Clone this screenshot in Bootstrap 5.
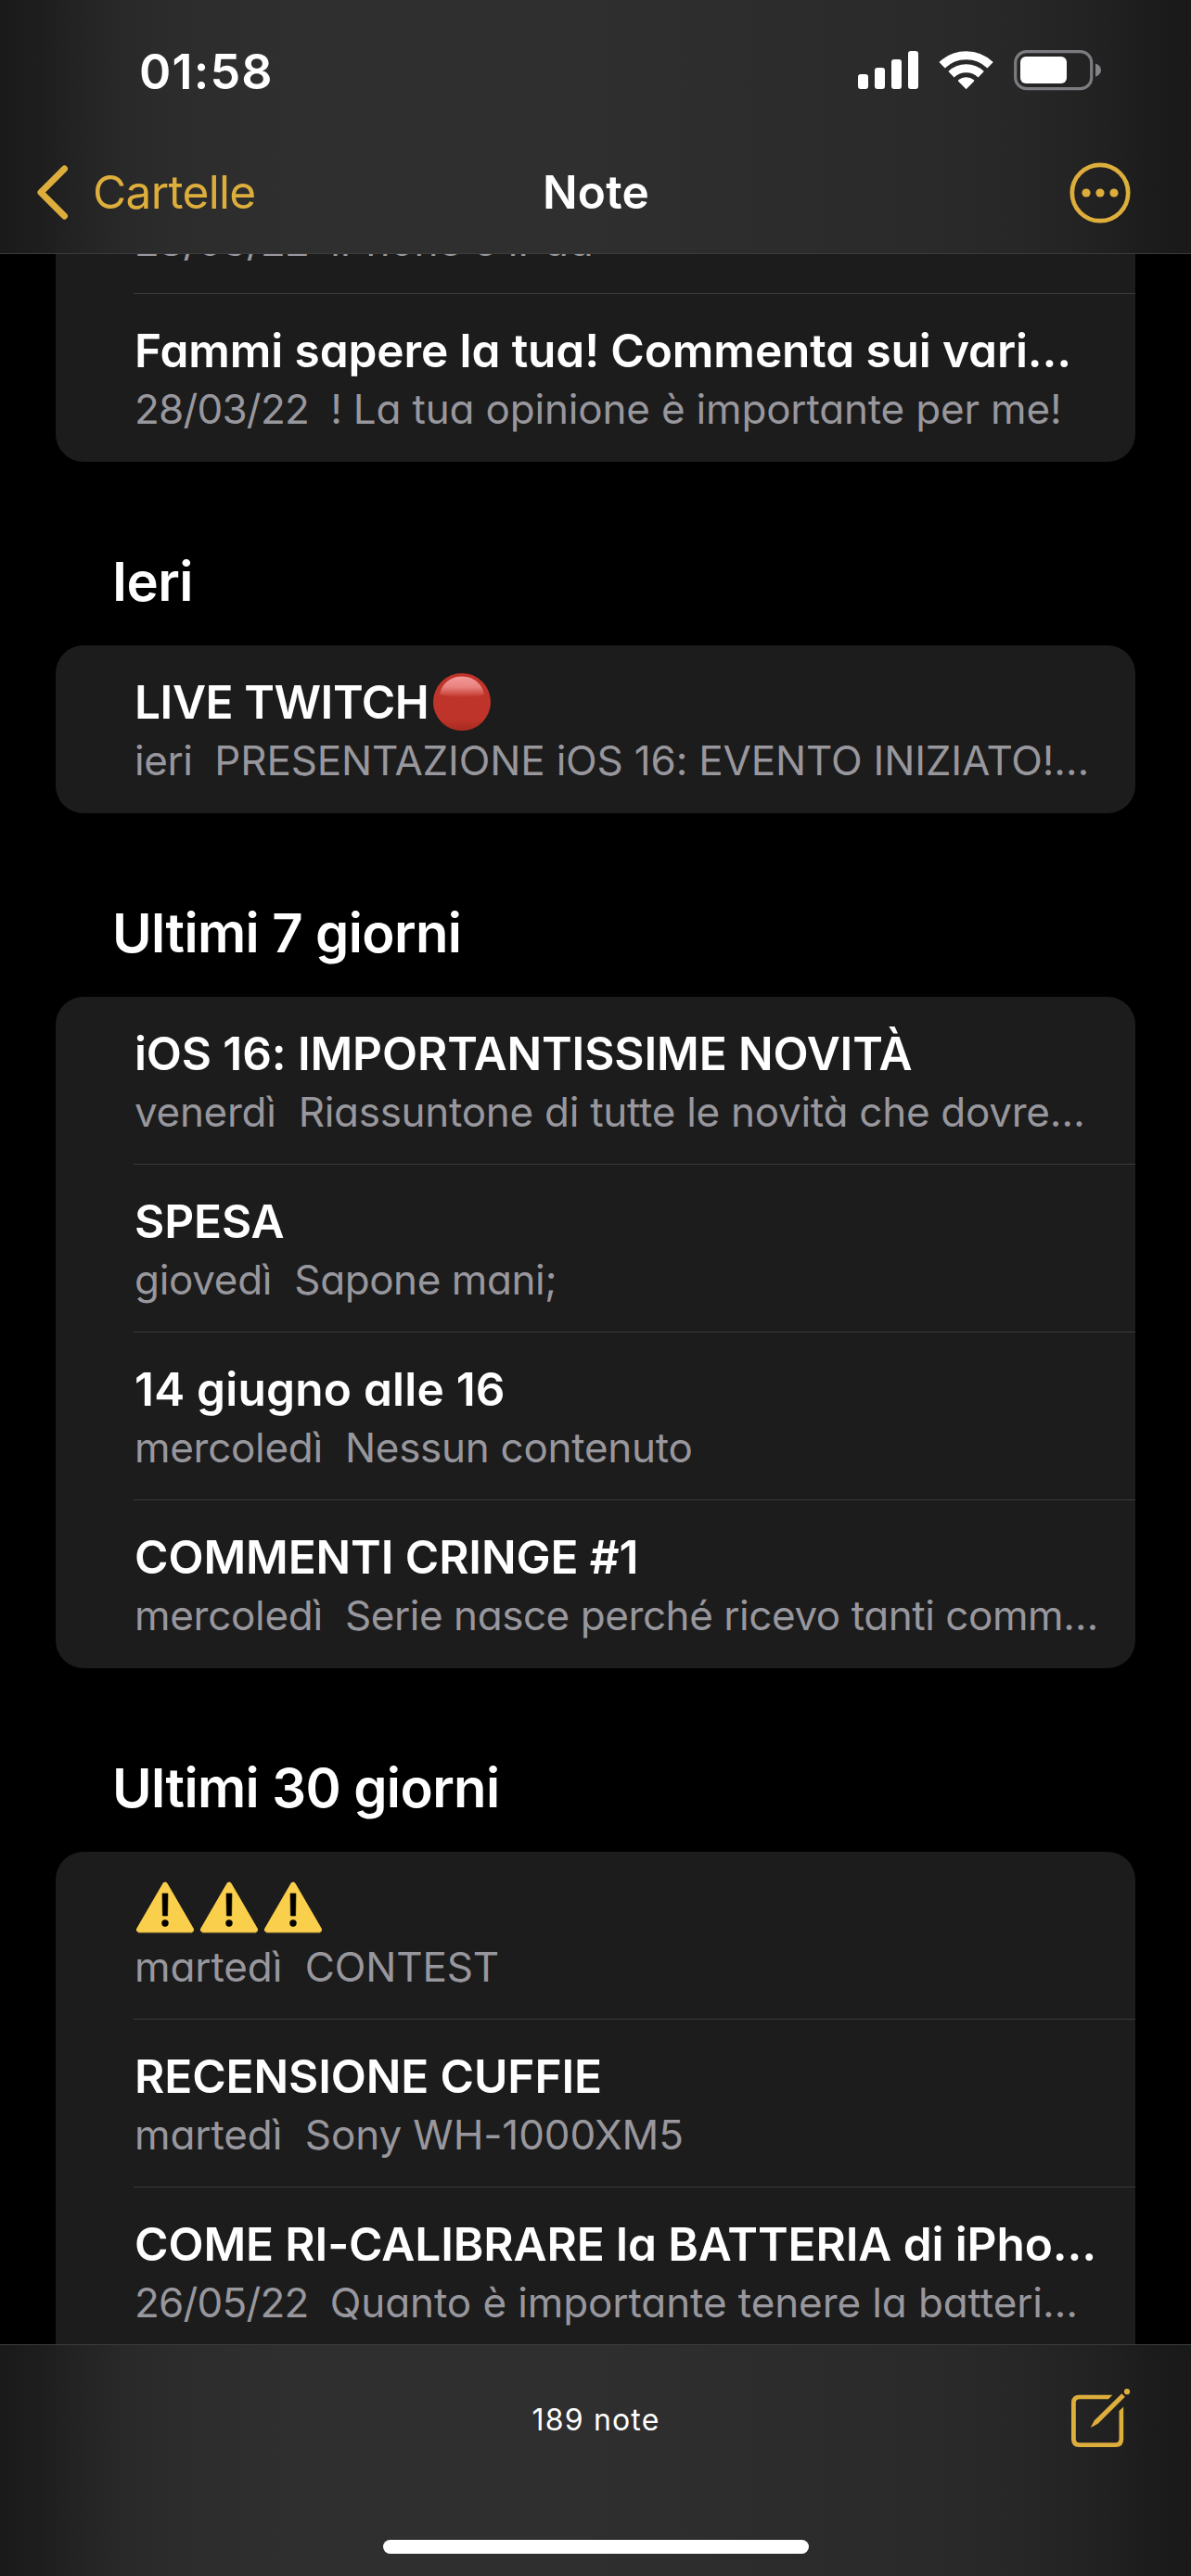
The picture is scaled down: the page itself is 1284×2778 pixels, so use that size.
<!DOCTYPE html>
<html lang="it" data-bs-theme="dark">
<head>
<meta charset="utf-8">
<meta name="viewport" content="width=device-width, initial-scale=1">
<title>Note</title>
<link rel="stylesheet" href="https://cdn.jsdelivr.net/npm/bootstrap@5.3.0/dist/css/bootstrap.min.css">
<style>
  body { background: #000; font-family: Inter, "Liberation Sans", sans-serif; color: #fff; }
  svg { display: block; flex: none; }
  .screen { width: 1284px; height: 2778px; }
  .blur-bar { background: linear-gradient(90deg, #1a1a1a 0, #1e1e1e 45px, #242424 90px, #292929 135px, #2c2c2c 190px, #2f2f2f 320px, #2f2f2f 620px, #2c2c2c 850px, #2a2a2a 1000px, #272727 1100px, #222222 1180px, #1c1c1c 1240px, #191919 1284px); }
  .top-bar { height: 274px; border-bottom: 1px solid #3b3b3b; }
  .bottom-bar { height: 250px; border-top: 1px solid #3b3d3c; }
  .status-row { height: 154px; padding: 0 95px 0 150px; }
  .clock { font-size: 52px; font-weight: 600; letter-spacing: 1.2px; line-height: 1; margin-top: 2px; }
  .nav-row { height: 107px; padding: 0 38px; font-size: 49.6px; line-height: 60px; }
  .nav-label { margin-top: -2px; }
  .amber { color: #ddae3c; }
  .back-label { letter-spacing: -.7px; margin-left: 24px; }
  .page-title { font-weight: 600; letter-spacing: .2px; padding-left: 1px; }
  .more-icon { margin-right: 27px; }
  .notes { padding: 0 60px; }
  .notes-inner { margin-top: -138px; }
  .note-card { background: #1c1c1c; border-radius: 30px; padding-left: 84px; font-feature-settings: "cv11"; }
  .note-row { height: 181px; padding: 29px 0 0 1px; border-bottom: 1px solid #3a3a3c; white-space: pre; }
  .note-row:last-child { border-bottom: 0; }
  .note-title { height: 64px; font-size: 49.6px; font-weight: 600; line-height: 64px; letter-spacing: -.12px; }
  .note-sub { font-size: 44px; line-height: 62px; letter-spacing: -.18px; color: #98979d; }
  .day { letter-spacing: -.3px; }
  .date { letter-spacing: -.8px; }
  .tight { letter-spacing: -.44px; }
  .snug { letter-spacing: -.28px; }
  .even { letter-spacing: -.1px; }
  .loose { letter-spacing: .2px; }
  .section-title { height: 198px; margin: 0; padding: 94px 60px 0 61px; font-size: 58px; font-weight: 600; line-height: 70px; letter-spacing: -.6px; }
  .tool-row { height: 160px; padding: 0 65px; }
  .note-count { font-size: 32px; letter-spacing: 1.2px; padding: 1px 0 0 1px; }
  .home-line { width: 459px; height: 15px; border-radius: 8px; background: #fff; margin-top: 50px; }
</style>
</head>
<body>
<div class="screen d-flex flex-column overflow-hidden mx-auto">

  <header class="blur-bar top-bar flex-shrink-0">
    <div class="status-row d-flex align-items-center justify-content-between">
      <span class="clock">01:58</span>
      <svg width="264" height="46" viewBox="925 54 264 46" fill="#fff" aria-hidden="true">
        <rect x="925" y="80" width="11" height="16" rx="3"/>
        <rect x="943" y="73" width="11" height="23" rx="3"/>
        <rect x="961" y="64" width="11" height="32" rx="3"/>
        <rect x="979" y="55" width="11" height="41" rx="3"/>
        <path d="M1015.6 70.3A37.2 37.2 0 0 1 1067.6 70.3" fill="none" stroke="#fff" stroke-width="9"/>
        <path d="M1025.5 80.2A23.2 23.2 0 0 1 1057.7 80.2" fill="none" stroke="#fff" stroke-width="9"/>
        <path d="M1041.6 96.2L1033 87.6Q1032.6 86.7 1033.5 86A13 13 0 0 1 1049.7 86Q1050.6 86.7 1050.2 87.6Z"/>
        <rect x="1094.7" y="55.7" width="82" height="40" rx="12" fill="none" stroke="#7c7b80" stroke-width="3.2"/>
        <rect x="1100" y="61" width="50" height="29" rx="6"/>
        <path d="M1181 68.5Q1187 70.5 1187 75.6T1181 82.7Z" fill="#838287"/>
      </svg>
    </div>
    <nav class="nav-row d-flex align-items-center">
      <a class="col d-flex align-items-center amber text-decoration-none" href="#">
        <svg width="38" height="62" viewBox="38 176 38 62" fill="none" stroke="currentColor" stroke-width="7" stroke-linecap="round" stroke-linejoin="round" aria-hidden="true">
          <path d="M69.500 181L44 206.500L69.500 232"/>
        </svg>
        <span class="nav-label back-label">Cartelle</span>
      </a>
      <span class="nav-label page-title">Note</span>
      <a class="col d-flex justify-content-end amber" href="#" aria-label="Altro">
        <svg class="more-icon" width="66" height="66" viewBox="0 0 66 66" aria-hidden="true">
          <circle cx="33" cy="33" r="30.2" fill="none" stroke="currentColor" stroke-width="4.7"/>
          <g fill="currentColor"><circle cx="18" cy="33" r="4.6"/><circle cx="33" cy="33" r="4.6"/><circle cx="48" cy="33" r="4.6"/></g>
        </svg>
      </a>
    </nav>
  </header>

  <main class="notes flex-grow-1 overflow-hidden" style="min-height:0">
    <div class="notes-inner">
      <section class="note-card">
        <div class="note-row"><div class="note-title"> </div><div class="note-sub"><span class="date">28/03/22  </span>iPhone e iPad</div></div>
        <div class="note-row"><div class="note-title">Fammi sapere la tua! Commenta sui vari…</div><div class="note-sub"><span class="date">28/03/22  </span>! La tua opinione è importante per me!</div></div>
      </section>

      <h2 class="section-title">Ieri</h2>
      <section class="note-card">
        <div class="note-row"><div class="note-title tight d-flex">LIVE TWITCH<svg width="67" height="64" viewBox="-3 0 67 64" role="img" aria-label="cerchio rosso">
          <defs><linearGradient id="shine" x1="0" y1="0" x2="0" y2="1"><stop offset="0" stop-color="#f29a98"/><stop offset=".5" stop-color="#e9827f"/><stop offset="1" stop-color="#c03529"/></linearGradient>
          <linearGradient id="ball" x1="0" y1="0" x2="0" y2="1"><stop offset="0" stop-color="#c0342a"/><stop offset=".8" stop-color="#bf342a"/><stop offset="1" stop-color="#a52a20"/></linearGradient></defs>
          <circle cx="33" cy="32" r="31" fill="url(#ball)"/><path d="M9 24C11 12 21 4.500 33 4.500S55 12 57 24Q45 27 33 27T9 24Z" fill="url(#shine)"/></svg></div><div class="note-sub"><span class="day tight">ieri  </span>PRESENTAZIONE iOS 16: EVENTO INIZIATO!…</div></div>
      </section>

      <h2 class="section-title">Ultimi 7 giorni</h2>
      <section class="note-card">
        <div class="note-row"><div class="note-title">iOS 16: IMPORTANTISSIME NOVITÀ</div><div class="note-sub snug"><span class="day">venerdì  </span>Riassuntone di tutte le novità che dovre…</div></div>
        <div class="note-row"><div class="note-title">SPESA</div><div class="note-sub tight"><span class="day">giovedì  </span>Sapone mani;</div></div>
        <div class="note-row"><div class="note-title loose">14 giugno alle 16</div><div class="note-sub snug"><span class="day">mercoledì  </span>Nessun contenuto</div></div>
        <div class="note-row"><div class="note-title">COMMENTI CRINGE #1</div><div class="note-sub tight"><span class="day">mercoledì  </span>Serie nasce perché ricevo tanti comm…</div></div>
      </section>

      <h2 class="section-title">Ultimi 30 giorni</h2>
      <section class="note-card rounded-bottom-0">
        <div class="note-row"><div class="note-title"><svg width="207" height="64" viewBox="1 0 207 64" role="img" aria-label="attenzione">
          <defs><g id="warn"><path d="M34 6.700L6 55H62Z" fill="#f9cf4b" stroke="#f9cf4b" stroke-width="6" stroke-linejoin="round"/><path d="M5 58.300H63" stroke="#8e7a3d" stroke-width=".8"/><path d="M31 16H37L36.600 40H31.400Z" stroke="#000" stroke-width=".6"/><circle cx="34" cy="48" r="3.700"/></g></defs>
          <use href="#warn"/><use href="#warn" x="69"/><use href="#warn" x="138"/></svg></div><div class="note-sub"><span class="day even">martedì  </span>CONTEST</div></div>
        <div class="note-row"><div class="note-title">RECENSIONE CUFFIE</div><div class="note-sub even">martedì  Sony WH-1000XM5</div></div>
        <div class="note-row"><div class="note-title">COME RI-CALIBRARE la BATTERIA di iPho…</div><div class="note-sub even"><span class="date">26/05/22  </span>Quanto è importante tenere la batteri…</div></div>
      </section>
    </div>
  </main>

  <footer class="blur-bar bottom-bar flex-shrink-0">
    <div class="tool-row d-flex align-items-center">
      <span class="col"></span>
      <span class="note-count">189 note</span>
      <a class="col d-flex justify-content-end amber" href="#" aria-label="Nuova nota">
        <svg width="66" height="70" viewBox="13 14 66 70" aria-hidden="true">
          <path d="M59.300 22.800L55 27.300H24Q19.800 27.300 19.800 31.500V70Q19.800 74.200 24 74.200H62.300Q66.500 74.200 66.500 70V40.100L71.200 35.500V70.500Q71.200 79 62.700 79H23.500Q15 79 15 70.500V31.300Q15 22.800 23.500 22.800Z" fill="currentColor"/>
          <path d="M69.300 21.200L72.900 24.800L43.700 53.800L36.800 57.600Q35.800 57.900 36.200 56.900L39.800 50.300Z" fill="currentColor"/>
          <circle cx="75" cy="19.200" r="3.100" fill="currentColor"/>
        </svg>
      </a>
    </div>
    <div class="home-line mx-auto"></div>
  </footer>
</div>
<script src="https://cdn.jsdelivr.net/npm/bootstrap@5.3.0/dist/js/bootstrap.bundle.min.js"></script>
</body>
</html>
